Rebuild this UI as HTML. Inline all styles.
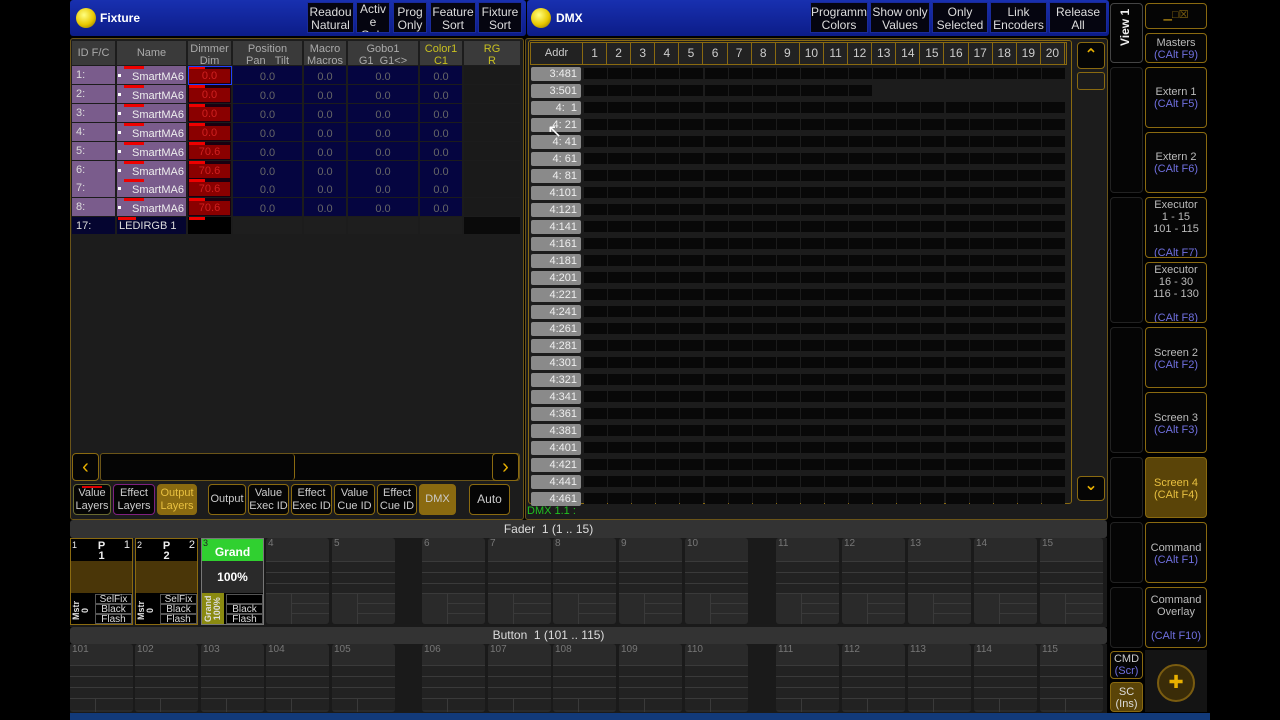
<!DOCTYPE html>
<html><head><meta charset="utf-8">
<style>
*{box-sizing:border-box;margin:0;padding:0}
body{width:1280px;height:720px;background:#000;position:relative;overflow:hidden;font-family:"Liberation Sans","DejaVu Sans",sans-serif;color:#ddd}
.a{position:absolute}
.title{background:linear-gradient(#1830b0,#0c1c88);border-radius:3px}
.tb{position:absolute;top:2px;height:31px;background:#050510;border:1px solid #1a2a9a;color:#ddd;font-size:12px;line-height:13px;text-align:center;padding-top:3px;overflow:hidden;white-space:nowrap}
.ball{position:absolute;width:20px;height:20px;border-radius:50%;background:radial-gradient(circle at 40% 35%,#ffff80,#e8c800 55%,#7a6000)}
.hd{position:absolute;background:#3a3a3a;color:#bbb;font-size:11px;line-height:12px;text-align:center;padding-top:2px}
.cell{position:absolute;font-size:11px;line-height:18px;text-align:center;color:#666}
.gb{position:absolute;border:1px solid #8a6a10;border-radius:4px;background:#050505;color:#ccc;font-size:12px;text-align:center;line-height:13px}
.ex{position:absolute;background:#2a2a2a;border-radius:3px}
.rb{position:absolute;left:1145px;width:62px;border:1px solid #8a6a10;border-radius:4px;background:#050505;color:#bbb;font-size:11px;line-height:12px;text-align:center;overflow:hidden;white-space:nowrap}
.rb i{font-style:normal;color:#7070e0}
</style></head><body>

<div class="a title" style="left:70px;top:0;width:456px;height:36px"></div>
<div class="ball" style="left:76px;top:8px"></div>
<div class="a" style="left:100px;top:11px;font-size:12px;font-weight:bold;color:#fff">Fixture</div>
<div class="tb" style="left:307px;width:47px">Readou<br>Natural</div>
<div class="tb" style="left:356px;width:34px;padding-top:0">Activ<br>e<br>Only</div>
<div class="tb" style="left:393px;width:34px">Prog<br>Only</div>
<div class="tb" style="left:430px;width:46px">Feature<br>Sort</div>
<div class="tb" style="left:478px;width:44px">Fixture<br>Sort</div>

<div class="a" style="left:70px;top:38px;width:454px;height:482px;background:#1c1c1c;border:1px solid #6a5418;border-radius:3px"></div>
<div id="fix"></div>

<div class="gb" style="left:72px;top:453px;width:27px;height:28px;color:#e8b000;font-size:20px;line-height:26px">&#8249;</div>
<div class="a" style="left:100px;top:453px;width:420px;height:28px;border:1px solid #6a5418;border-radius:3px;background:#050505"></div>
<div class="a" style="left:101px;top:454px;width:194px;height:26px;border-right:1px solid #8a6a10;border-radius:3px"></div>
<div class="gb" style="left:492px;top:453px;width:27px;height:28px;color:#e8b000;font-size:20px;line-height:26px">&#8250;</div>

<div class="gb" style="left:73px;top:484px;width:38px;height:31px;padding-top:2px;border-color:#6a6a30;font-size:11px">Value<br>Layers</div>
<div class="a" style="left:82px;top:486px;width:20px;height:2px;background:#d00"></div>
<div class="gb" style="left:113px;top:484px;width:42px;height:31px;padding-top:2px;border-color:#802080;font-size:11px">Effect<br>Layers</div>
<div class="gb" style="left:157px;top:484px;width:40px;height:31px;padding-top:2px;background:#8a6a10;color:#e8c040;font-size:11px">Output<br>Layers</div>
<div class="gb" style="left:208px;top:484px;width:38px;height:31px;line-height:29px;font-size:11px">Output</div>
<div class="gb" style="left:248px;top:484px;width:41px;height:31px;padding-top:2px;font-size:11px">Value<br>Exec ID</div>
<div class="gb" style="left:291px;top:484px;width:41px;height:31px;padding-top:2px;font-size:11px">Effect<br>Exec ID</div>
<div class="gb" style="left:334px;top:484px;width:41px;height:31px;padding-top:2px;font-size:11px">Value<br>Cue ID</div>
<div class="gb" style="left:377px;top:484px;width:40px;height:31px;padding-top:2px;font-size:11px">Effect<br>Cue ID</div>
<div class="gb" style="left:419px;top:484px;width:37px;height:31px;line-height:29px;background:#8a6a10;color:#ccc;font-size:11px">DMX</div>
<div class="gb" style="left:469px;top:484px;width:41px;height:31px;line-height:29px;font-size:12px">Auto</div>

<div class="a title" style="left:527px;top:0;width:582px;height:36px"></div>
<div class="ball" style="left:531px;top:8px"></div>
<div class="a" style="left:556px;top:11px;font-size:12px;font-weight:bold;color:#fff">DMX</div>
<div class="tb" style="left:810px;width:58px">Programm<br>Colors</div>
<div class="tb" style="left:870px;width:60px">Show only<br>Values</div>
<div class="tb" style="left:932px;width:56px">Only<br>Selected</div>
<div class="tb" style="left:990px;width:57px">Link<br>Encoders</div>
<div class="tb" style="left:1049px;width:58px">Release<br>All</div>

<div class="a" style="left:525px;top:38px;width:583px;height:482px;background:#1c1c1c;border:1px solid #6a5418;border-radius:3px"></div>
<div class="a" style="left:528px;top:40px;width:544px;height:464px;border:1px solid #8a6a10;border-radius:3px;background:#1c1c1c"></div>
<div class="a" style="left:530px;top:42px;width:537px;height:23px;border:1px solid #8a6a10;background:#222"></div>
<div id="dmx"></div>
<div class="gb" style="left:1077px;top:42px;width:28px;height:27px;color:#e8b000;font-size:16px;line-height:26px;font-weight:bold">&#8963;</div>
<div class="a" style="left:1077px;top:72px;width:28px;height:18px;border:1px solid #8a6a10;border-radius:3px"></div>
<div class="gb" style="left:1077px;top:476px;width:28px;height:25px;color:#e8b000;font-size:16px;line-height:18px;font-weight:bold">&#8964;</div>
<div class="a" style="left:527px;top:505px;font-size:11px;color:#20c020">DMX 1.1 :</div>

<div class="a" style="left:1110px;top:3px;width:33px;height:60px;border:1px solid #444;border-radius:4px;background:#050505"></div>
<div class="a" style="left:1118px;top:46px;transform:rotate(-90deg);transform-origin:0 0;font-size:12px;font-weight:bold;color:#eee;white-space:nowrap">View 1</div>
<div class="rb" style="top:3px;height:26px;color:#8a6a10;font-size:11px;line-height:22px">&#9601;&#9633;&#9746;</div>
<div class="rb" style="top:33px;height:30px;padding-top:3px">Masters<br><i>(CAlt F9)</i></div>
<div class="rb" style="top:67px;height:61px;padding-top:18px">Extern 1<br><i>(CAlt F5)</i></div>
<div class="rb" style="top:132px;height:61px;padding-top:18px">Extern 2<br><i>(CAlt F6)</i></div>
<div class="rb" style="top:197px;height:61px;padding-top:1px">Executor<br>1 - 15<br>101 - 115<br><br><i>(CAlt F7)</i></div>
<div class="rb" style="top:262px;height:61px;padding-top:1px">Executor<br>16 - 30<br>116 - 130<br><br><i>(CAlt F8)</i></div>
<div class="rb" style="top:327px;height:61px;padding-top:19px">Screen 2<br><i>(CAlt F2)</i></div>
<div class="rb" style="top:392px;height:61px;padding-top:19px">Screen 3<br><i>(CAlt F3)</i></div>
<div class="rb" style="top:457px;height:61px;padding-top:19px;background:#5a4408;color:#e8c040">Screen 4<br>(CAlt F4)</div>
<div class="rb" style="top:522px;height:61px;padding-top:19px">Command<br><i>(CAlt F1)</i></div>
<div class="rb" style="top:587px;height:61px;padding-top:6px">Command<br>Overlay<br><br><i>(CAlt F10)</i></div>
<div class="a" style="left:1110px;top:67px;width:33px;height:126px;background:#050505;border:1px solid #222;border-radius:4px"></div>
<div class="a" style="left:1110px;top:197px;width:33px;height:126px;background:#050505;border:1px solid #222;border-radius:4px"></div>
<div class="a" style="left:1110px;top:327px;width:33px;height:126px;background:#050505;border:1px solid #222;border-radius:4px"></div>
<div class="a" style="left:1110px;top:457px;width:33px;height:61px;background:#050505;border:1px solid #222;border-radius:4px"></div>
<div class="a" style="left:1110px;top:522px;width:33px;height:61px;background:#050505;border:1px solid #222;border-radius:4px"></div>
<div class="a" style="left:1110px;top:587px;width:33px;height:61px;background:#050505;border:1px solid #222;border-radius:4px"></div>
<div class="a" style="left:1145px;top:650px;width:62px;height:62px;background:#141414"></div>
<div class="gb" style="left:1110px;top:651px;width:33px;height:28px;padding-top:1px;font-size:11px;line-height:12px">CMD<br><span style="color:#7070e0">(Scr)</span></div>
<div class="gb" style="left:1110px;top:682px;width:33px;height:30px;padding-top:3px;font-size:11px;line-height:12px;background:#5a4408;color:#ddd">SC<br>(Ins)</div>
<div class="a" style="left:1157px;top:664px;width:38px;height:38px;border-radius:50%;border:2px solid #7a5c10;background:#3a2c08;color:#e8b000;font-size:18px;text-align:center;line-height:33px">&#10010;</div>

<div class="a" style="left:70px;top:520px;width:1037px;height:18px;background:#333;border-radius:3px;font-size:12px;color:#ddd;text-align:center;line-height:18px;padding-right:80px">Fader &nbsp;1 (1 .. 15)</div>
<div class="a" style="left:70px;top:627px;width:1037px;height:17px;background:#333;border-radius:3px;font-size:12px;color:#ddd;text-align:center;line-height:17px;padding-right:80px">Button &nbsp;1 (101 .. 115)</div>
<div class="a" style="left:70px;top:538px;width:1037px;height:89px;background:#1a1a1a"></div>
<div class="a" style="left:70px;top:644px;width:1037px;height:69px;background:#1a1a1a"></div>
<div id="ex"></div>
<div class="a" style="left:70px;top:713px;width:1140px;height:7px;background:#123a7a"></div>

<script>
function el(h){document.body.insertAdjacentHTML('beforeend',h)}
var cols=[[72,43,'ID F/C',''],[117,69,'Name',''],[188,43,'Dimmer','Dim'],[233,69,'Position','Pan &nbsp;&nbsp;Tilt'],[304,42,'Macro','Macros'],[348,70,'Gobo1','G1 &nbsp;G1&lt;&gt;'],[420,42,'Color1','C1'],[464,56,'RG','R']];
cols.forEach(function(c,i){var col=i==6||i==7?'#c8c020':'#aaa';
 el('<div class="hd" style="left:'+c[0]+'px;top:41px;width:'+c[1]+'px;height:24px;color:'+col+(i<2?';line-height:20px':'')+'">'+c[2]+(c[3]?'<br>'+c[3]:'')+'</div>')});
var ys=[66,85,104,123,142,161,179,198];
ys.forEach(function(y,r){
 el('<div class="cell" style="left:72px;top:'+y+'px;width:43px;height:18px;background:#7a5c8c;color:#ddd;text-align:left;padding-left:4px">'+(r+1)+':</div>');
 el('<div class="cell" style="left:117px;top:'+y+'px;width:69px;height:18px;background:#7a5c8c;color:#eee;text-align:right;padding-right:2px;padding-top:2px">SmartMA6</div>');
 el('<div class="a" style="left:118px;top:'+(y+8)+'px;width:3px;height:3px;background:#fff"></div><div class="a" style="left:124px;top:'+y+'px;width:20px;height:3px;background:#e00"></div>');
 el('<div class="cell" style="left:188px;top:'+y+'px;width:43px;height:18px;background:#1a0010"></div><div class="cell" style="left:189px;top:'+(y+3)+'px;width:41px;height:14px;background:#8a0000;color:#d02020;line-height:14px">'+(r<4?'0.0':'70.6')+'</div><div class="a" style="left:189px;top:'+y+'px;width:16px;height:3px;background:#e00"></div>');
 [3,4,5,6].forEach(function(i){el('<div class="cell" style="left:'+cols[i][0]+'px;top:'+y+'px;width:'+cols[i][1]+'px;height:18px;background:#050540;padding-top:2px">0.0</div>')});
 el('<div class="cell" style="left:464px;top:'+y+'px;width:56px;height:18px;background:#1a1a1a"></div>');
});
el('<div class="a" style="left:188px;top:66px;width:44px;height:19px;border:1px solid #2040ff"></div>');
var y=217;
el('<div class="cell" style="left:72px;top:'+y+'px;width:43px;height:17px;background:#050530;color:#ddd;text-align:left;padding-left:4px">17:</div><div class="cell" style="left:117px;top:'+y+'px;width:69px;height:17px;background:#050530;color:#ddd;text-align:left;padding-left:2px">LEDIRGB 1</div><div class="cell" style="left:188px;top:'+y+'px;width:43px;height:17px;background:#000"></div><div class="a" style="left:118px;top:217px;width:18px;height:3px;background:#e00"></div><div class="a" style="left:189px;top:217px;width:16px;height:3px;background:#e00"></div>');
[3,4,5,6].forEach(function(i){el('<div class="cell" style="left:'+cols[i][0]+'px;top:'+y+'px;width:'+cols[i][1]+'px;height:17px;background:#1e1e1e"></div>')});
el('<div class="cell" style="left:464px;top:'+y+'px;width:56px;height:17px;background:#0a0a0a"></div>');

el('<div class="a" style="left:531px;top:43px;width:52px;height:21px;line-height:21px;text-align:center;color:#ccc;font-size:11px;border-right:1px solid #8a6a10">Addr</div>');
for(var c=0;c<20;c++){var x=583+c*24.1;el('<div class="a" style="left:'+x+'px;top:43px;width:24.1px;height:21px;line-height:21px;text-align:center;color:#ccc;font-size:12px;border-right:1px solid #8a6a10">'+(c+1)+'</div>')}
for(var r=0;r<26;r++){var yy=67+r*17;var n=r<2?(481+r*20):(1+(r-2)*20);var lab=(r<2?'3':'4')+':'+(n<10?'&nbsp;&nbsp;':n<100?'&nbsp;':'')+n;
 el('<div class="a" style="left:531px;top:'+yy+'px;width:50px;height:14px;background:#8a8a8a;color:#eee;font-size:11px;line-height:14px;text-align:right;padding-right:4px;border-radius:2px">'+lab+'</div>');
 var cnt=r==1?12:20;
 for(var c=0;c<cnt;c++){el('<div class="a" style="left:'+(584+c*24.1)+'px;top:'+(yy+1)+'px;width:23px;height:11px;background:#080808"></div>')}
}
el('<div class="a" style="left:547px;top:122px;color:#fff;font-size:18px;line-height:18px">&#x2196;</div>');

var xs=[70,135,201,266,332,422,488,553,619,685,776,842,908,974,1040];
xs.forEach(function(x,i){
 if(i>2){
  var w=63;
  el('<div class="ex" style="left:'+x+'px;top:538px;width:'+w+'px;height:86px"></div><div class="a" style="left:'+(x+2)+'px;top:538px;font-size:10px;color:#777">'+(i+1)+'</div>');
  el('<div class="a" style="left:'+x+'px;top:561px;width:'+w+'px;height:32px;background:#222"></div>');
  for(var k=0;k<3;k++)el('<div class="a" style="left:'+x+'px;top:'+(561+k*11)+'px;width:'+w+'px;height:1px;background:#3a3a3a"></div>');
  el('<div class="a" style="left:'+x+'px;top:593px;width:'+w+'px;height:1px;background:#3a3a3a"></div>');
  el('<div class="a" style="left:'+(x+25)+'px;top:593px;width:1px;height:31px;background:#3a3a3a"></div>');
  for(var k=0;k<2;k++)el('<div class="a" style="left:'+(x+25)+'px;top:'+(603+k*10)+'px;width:'+(w-25)+'px;height:1px;background:#3a3a3a"></div>');
 }
 el('<div class="ex" style="left:'+x+'px;top:644px;width:63px;height:68px"></div><div class="a" style="left:'+(x+2)+'px;top:644px;font-size:10px;color:#777">'+(101+i)+'</div>');
 el('<div class="a" style="left:'+x+'px;top:665px;width:63px;height:45px;background:#222"></div>');
 for(var k=0;k<4;k++)el('<div class="a" style="left:'+x+'px;top:'+(665+k*11)+'px;width:63px;height:1px;background:#3a3a3a"></div>');
 el('<div class="a" style="left:'+(x+25)+'px;top:699px;width:1px;height:13px;background:#3a3a3a"></div>');
});
[0,1].forEach(function(i){var x=xs[i];
 el('<div class="a" style="left:'+x+'px;top:538px;width:63px;height:87px;border:1px solid #8a6a10;background:#4a3608"></div>');
 el('<div class="a" style="left:'+(x+1)+'px;top:539px;width:61px;height:22px;background:#000;color:#eee;font-size:11px;line-height:10px"><span style="position:absolute;left:1px;top:1px;font-size:9px">'+(i+1)+'</span><span style="position:absolute;right:2px;top:1px">'+(i+1)+'</span><div style="text-align:center;font-weight:bold;padding-top:2px">P<br>'+(i+1)+'</div></div>');
 el('<div class="a" style="left:'+(x+1)+'px;top:593px;width:61px;height:31px;background:#000"></div>');
 el('<div class="a" style="left:'+(x+2)+'px;top:620px;transform:rotate(-90deg);transform-origin:0 0;font-size:9px;line-height:9px;color:#ddd;text-align:center;font-weight:bold">Mstr<br>0</div>');
 ['SelFix','Black','Flash'].forEach(function(t,k){el('<div class="a" style="left:'+(x+25)+'px;top:'+(594+k*10)+'px;width:37px;height:10px;border:1px solid #555;font-size:10px;line-height:9px;color:#ddd;text-align:center">'+t+'</div>')});
});
var gx=201;
el('<div class="a" style="left:'+gx+'px;top:538px;width:63px;height:87px;border:1px solid #777;background:#2a2a2a"></div>');
el('<div class="a" style="left:'+(gx+1)+'px;top:539px;width:61px;height:22px;background:#30d030;color:#fff;font-size:12px;font-weight:bold;text-align:center;line-height:26px">Grand</div><span class="a" style="left:'+(gx+2)+'px;top:538px;font-size:9px;color:#222">3</span>');
el('<div class="a" style="left:'+(gx+1)+'px;top:562px;width:61px;height:31px;background:#2a2a2a;color:#fff;font-size:12px;font-weight:bold;text-align:center;line-height:30px">100%</div>');
el('<div class="a" style="left:'+(gx+1)+'px;top:593px;width:61px;height:31px;background:#000"></div><div class="a" style="left:'+(gx+1)+'px;top:593px;width:22px;height:31px;background:#8a8a10"></div>');
el('<div class="a" style="left:'+(gx+3)+'px;top:622px;transform:rotate(-90deg);transform-origin:0 0;font-size:9px;line-height:9px;color:#ddd;font-weight:bold;text-align:center">Grand<br>100%</div>');
['','Black','Flash'].forEach(function(t,k){el('<div class="a" style="left:'+(gx+25)+'px;top:'+(594+k*10)+'px;width:37px;height:10px;border:1px solid #555;font-size:10px;line-height:9px;color:#ddd;text-align:center">'+t+'</div>')});
</script>
</body></html>
